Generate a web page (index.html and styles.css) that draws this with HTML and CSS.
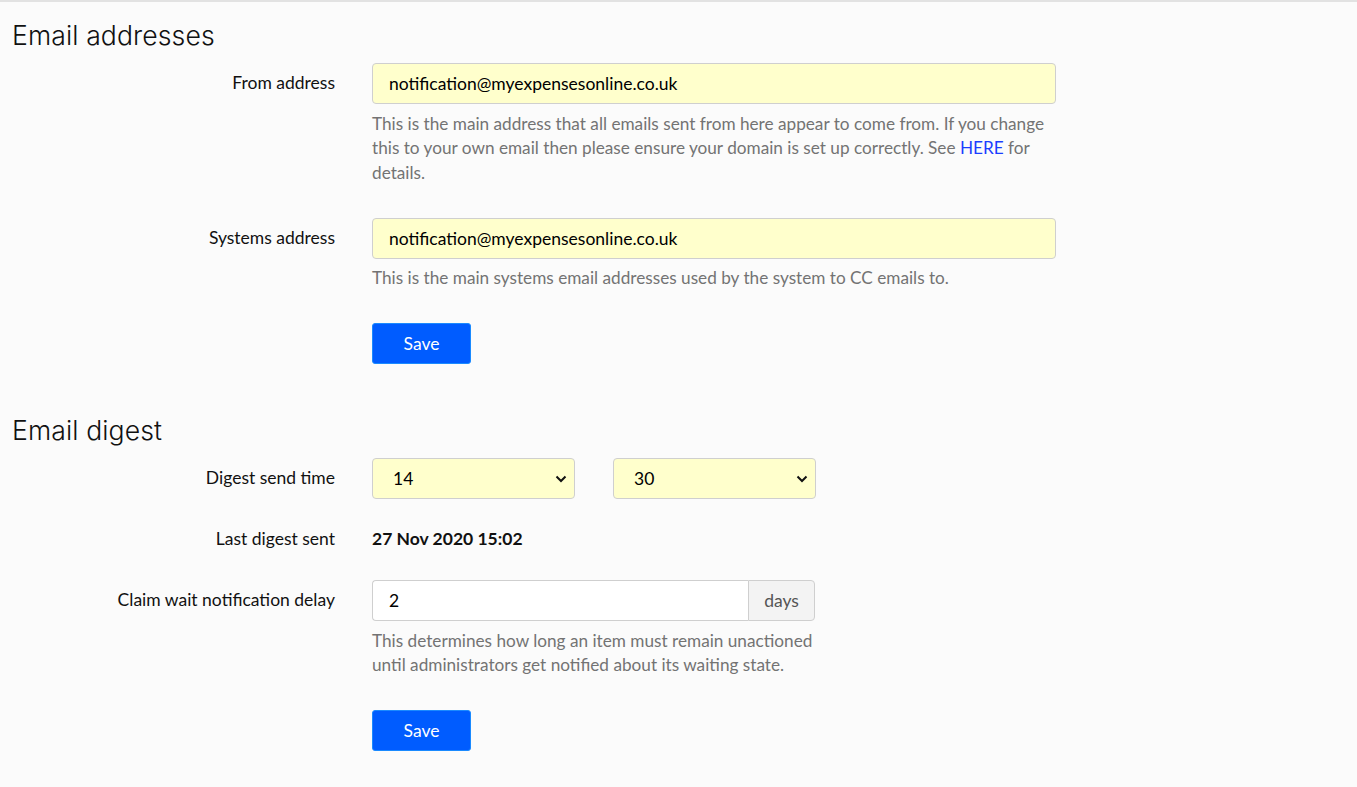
FILE: index.html
```html
<!DOCTYPE html>
<html lang="en">
<head>
<meta charset="utf-8">
<title>Email settings</title>
<link rel="stylesheet" href="styles.css">
</head>
<body>
<main class="page">
  <section class="section">
    <h2 class="section-title">Email addresses</h2>
    <div class="field">
      <label class="field-label" for="from">From address</label>
      <div class="field-control wide">
        <input class="input yellow" id="from" type="text" value="notification@myexpensesonline.co.uk">
        <p class="help">This is the main address that all emails sent from here appear to come from. If you change this to your own email then please ensure your domain is set up correctly. See <a href="#" class="link">HERE</a> for details.</p>
      </div>
    </div>
    <div class="field">
      <label class="field-label" for="sys">Systems address</label>
      <div class="field-control wide">
        <input class="input yellow" id="sys" type="text" value="notification@myexpensesonline.co.uk">
        <p class="help">This is the main systems email addresses used by the system to CC emails to.</p>
      </div>
    </div>
    <div class="field">
      <div class="field-label"></div>
      <div class="field-control"><button class="btn">Save</button></div>
    </div>
  </section>

  <section class="section digest">
    <h2 class="section-title">Email digest</h2>
    <div class="field plain">
      <label class="field-label" for="hh">Digest send time</label>
      <div class="field-control selects">
        <select class="select yellow" id="hh"><option>14</option></select>
        <select class="select yellow"><option>30</option></select>
      </div>
    </div>
    <div class="field plain">
      <div class="field-label">Last digest sent</div>
      <div class="field-control static">27 Nov 2020 15:02</div>
    </div>
    <div class="field">
      <label class="field-label" for="delay">Claim wait notification delay</label>
      <div class="field-control narrow">
        <div class="input-group">
          <input class="input white" id="delay" type="text" value="2">
          <span class="addon">days</span>
        </div>
        <p class="help">This determines how long an item must remain unactioned until administrators get notified about its waiting state.</p>
      </div>
    </div>
    <div class="field">
      <div class="field-label"></div>
      <div class="field-control"><button class="btn">Save</button></div>
    </div>
  </section>
</main>
</body>
</html>
```
FILE: styles.css
```css
html, body {
  margin: 0;
  padding: 0;
}
body {
  background: #fbfbfb;
  border-top: 2px solid #e2e2e2;
  font-family: "Lato", "Liberation Sans", sans-serif;
  font-size: 17.5px;
  color: #111;
  min-height: 785px;
}
.page {
  padding: 0 12px;
}
.section-title {
  font-family: "Inter", "Noto Sans", sans-serif;
  font-weight: 300;
  font-size: 26.6px;
  line-height: 32px;
  letter-spacing: 0.1px;
  margin: 17px 0 12px 0;
  color: #111;
}
.digest .section-title {
  margin-top: 50px;
}
.field {
  display: grid;
  grid-template-columns: 323px 1fr;
  column-gap: 37px;
  margin-bottom: 20px;
}
.field-label {
  text-align: right;
  padding-top: 8px;
  line-height: 24px;
}
.field-control.wide {
  width: 684px;
}
.field-control.narrow {
  width: 443px;
}
.input {
  display: block;
  box-sizing: border-box;
  width: 100%;
  height: 41px;
  padding: 0 16px;
  border: 1px solid #cfcfcf;
  border-radius: 4px;
  font-family: "Lato", "Liberation Sans", sans-serif;
  font-size: 17.5px;
  color: #000;
  outline: none;
}
.yellow {
  background-color: #ffffcc;
}
.white {
  background-color: #ffffff;
}
.help {
  margin: 7.5px 0 12.5px 0;
  color: #737373;
  line-height: 24.5px;
  font-size: 17.2px;
}
.narrow .help {
  margin-right: -8px;
}
.link {
  color: #1a3dff;
  text-decoration: none;
}
.btn {
  box-sizing: border-box;
  width: 99px;
  height: 41px;
  background: #005cff;
  border: 1px solid #1a8aff;
  border-radius: 3px;
  color: #fff;
  font-family: "Lato", "Liberation Sans", sans-serif;
  font-size: 17.5px;
  cursor: pointer;
}
.selects {
  display: flex;
  gap: 38px;
}
.select {
  appearance: none;
  -webkit-appearance: none;
  box-sizing: border-box;
  width: 203px;
  height: 41px;
  padding: 0 30px 0 20px;
  border: 1px solid #cfcfcf;
  border-radius: 4px;
  font-family: "Lato", "Liberation Sans", sans-serif;
  font-size: 17.5px;
  color: #000;
  background-image: url("data:image/svg+xml;utf8,<svg xmlns='http://www.w3.org/2000/svg' width='12' height='8' viewBox='0 0 12 8'><path d='M1.5 1.5 L6 6 L10.5 1.5' fill='none' stroke='%23111' stroke-width='2'/></svg>");
  background-repeat: no-repeat;
  background-position: right 7px center;
  background-size: 12px 8px;
}
.static {
  font-weight: 700;
  padding-top: 8px;
  line-height: 24px;
  height: 33px;
}
.input-group {
  display: flex;
  height: 41px;
}
.input-group .input {
  flex: 1;
  border-radius: 4px 0 0 4px;
  border-right: none;
}
.addon {
  box-sizing: border-box;
  width: 67px;
  height: 41px;
  display: flex;
  align-items: center;
  justify-content: center;
  background: #f3f3f3;
  border: 1px solid #cfcfcf;
  border-radius: 0 4px 4px 0;
  color: #555;
}
```
